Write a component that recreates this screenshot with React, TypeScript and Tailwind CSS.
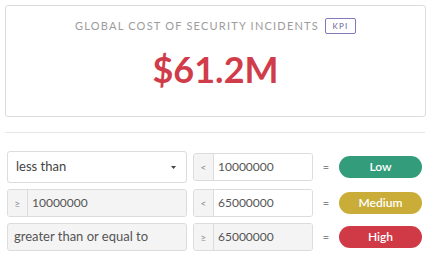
import type { FC, ReactNode } from "react";

const Badge: FC<{ label: string; color: string }> = ({ label, color }) => (
  <div
    className={`w-[83px] h-[22px] rounded-full flex items-center justify-center text-white text-[12px] font-semibold ${color}`}
  >
    {label}
  </div>
);

const InputGroup: FC<{ prefix: string; value: string; disabled?: boolean; width: string }> = ({
  prefix,
  value,
  disabled,
  width,
}) => (
  <div className={`flex h-[28px] border border-[#dcdcdc] rounded-[3px] overflow-hidden ${width}`}>
    <div className="w-[20px] flex items-center justify-center bg-[#f4f4f4] border-r border-[#dcdcdc] text-[10px] text-[#888]">
      {prefix}
    </div>
    <div
      className={`flex-1 flex items-center pl-[4px] text-[12px] text-[#555] ${
        disabled ? "bg-[#f4f4f4]" : "bg-white"
      }`}
    >
      {value}
    </div>
  </div>
);

const Row: FC<{ left: ReactNode; middle: ReactNode; badge: ReactNode; tall?: boolean }> = ({
  left,
  middle,
  badge,
  tall,
}) => (
  <div className={`flex items-center ${tall ? "h-[32px]" : "h-[28px]"}`}>
    <div className="w-[180px]">{left}</div>
    <div className="ml-[6px]">{middle}</div>
    <div className="w-[26px] text-center text-[11px] text-[#888]">=</div>
    {badge}
  </div>
);

export default function App() {
  return (
    <div className="w-[430px] h-[259px] bg-white overflow-hidden" style={{ fontFamily: "Lato, 'Open Sans', sans-serif" }}>
      <div className="mx-[5px] mt-[5px] h-[112px] w-[421px] border border-[#dcdcdc] rounded-[3px] flex flex-col items-center pt-[12px]">
        <div className="flex items-center h-[16px]">
          <span className="text-[11px] tracking-[0.11em] text-[#9c9c9c]">GLOBAL COST OF SECURITY INCIDENTS</span>
          <span className="ml-[6px] w-[31px] h-[16px] border border-[#8478b6] rounded-[2px] flex items-center justify-center text-[8px] tracking-[0.15em] text-[#6d619f]">
            KPI
          </span>
        </div>
        <div className="mt-[17px] text-[36px] leading-none font-bold text-[#d13c4a]">$61.2M</div>
      </div>

      <div className="mx-[5px] mt-[15px] h-px bg-[#e6e6e6]" />

      <div className="ml-[7px] mt-[18px] flex flex-col gap-[6px]">
        <Row
          tall
          left={
            <div className="h-[32px] border border-[#dcdcdc] rounded-[3px] flex items-center justify-between pl-[8px] pr-[10px] text-[13px] text-[#444]">
              <span>less than</span>
              <svg width="5" height="3" viewBox="0 0 5 3">
                <path d="M0 0h5L2.5 3z" fill="#444" />
              </svg>
            </div>
          }
          middle={<InputGroup prefix="<" value="10000000" width="w-[120px]" />}
          badge={<Badge label="Low" color="bg-[#329c7b]" />}
        />
        <Row
          left={<InputGroup prefix="≥" value="10000000" disabled width="w-[180px]" />}
          middle={<InputGroup prefix="<" value="65000000" width="w-[120px]" />}
          badge={<Badge label="Medium" color="bg-[#c9ad38]" />}
        />
        <Row
          left={
            <div className="h-[28px] border border-[#dcdcdc] rounded-[3px] bg-[#f4f4f4] flex items-center pl-[6px] text-[13px] text-[#555]">
              greater than or equal to
            </div>
          }
          middle={<InputGroup prefix="≥" value="65000000" disabled width="w-[120px]" />}
          badge={<Badge label="High" color="bg-[#d03a47]" />}
        />
      </div>
    </div>
  );
}
